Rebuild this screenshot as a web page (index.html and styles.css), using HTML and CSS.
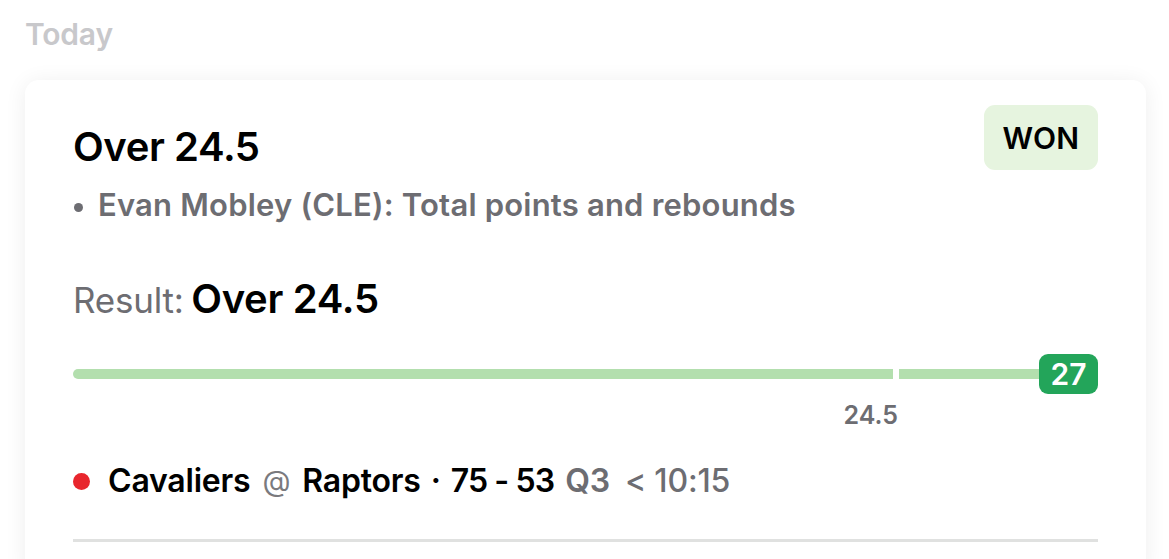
FILE: index.html
```html
<!DOCTYPE html>
<html>
<head>
<meta charset="utf-8">
<link rel="stylesheet" href="styles.css">
</head>
<body>
<div class="page">
  <div class="day">Today</div>
  <div class="card">
    <div class="head">
      <div class="head-text">
        <div class="title">Over 24.5</div>
        <div class="sub"><span class="sub-dot"></span>Evan Mobley (CLE): Total points and rebounds</div>
      </div>
      <div class="badge">WON</div>
    </div>
    <div class="result"><span class="result-label">Result:</span> <span class="result-value">Over 24.5</span></div>
    <div class="meter">
      <div class="track"></div>
      <div class="marker" style="left: 80%"></div>
      <div class="marker-label" style="left: 80%">24.5</div>
      <div class="value">27</div>
    </div>
    <div class="game">
      <span class="live-dot"></span>
      <span class="team">Cavaliers</span>
      <span class="at">@</span>
      <span class="team">Raptors</span>
      <span class="sep">·</span>
      <span class="score">75 - 53</span>
      <span class="period">Q3</span>
      <span class="clock">&lt; 10:15</span>
    </div>
    <div class="divider"></div>
  </div>
</div>
</body>
</html>
```

FILE: styles.css
```css
* { box-sizing: border-box; }
html, body { margin: 0; padding: 0; }
body {
  background: #ffffff;
  font-family: Inter, "Noto Sans", "Liberation Sans", sans-serif;
  color: #000;
  width: 1169px;
  height: 559px;
  overflow: hidden;
}
.page {
  padding: 14px 23px 0 25px;
  height: 559px;
  overflow: hidden;
}
.day {
  font-size: 30px;
  font-weight: 600;
  color: #c8c8cb;
  line-height: 40px;
  letter-spacing: -0.2px;
}
.card {
  margin-top: 26px;
  background: #fff;
  border-radius: 14px;
  box-shadow: 0 2px 22px rgba(0, 0, 0, 0.07);
  padding: 25px 48px 0 48px;
  height: 500px;
}
.head {
  display: flex;
  justify-content: space-between;
  align-items: flex-start;
}
.title {
  font-size: 40px;
  font-weight: 600;
  line-height: 48px;
  margin-top: 18px;
  letter-spacing: -0.4px;
}
.sub {
  display: flex;
  align-items: center;
  font-size: 31px;
  font-weight: 600;
  color: #6d6d72;
  line-height: 40px;
  margin-top: 14px;
  letter-spacing: 0.2px;
}
.sub-dot {
  width: 9px;
  height: 9px;
  border-radius: 50%;
  background: #6d6d72;
  margin: 4px 15px 0 1px;
}
.badge {
  background: #e6f4df;
  border-radius: 11px;
  width: 114px;
  height: 65px;
  display: flex;
  align-items: center;
  justify-content: center;
  font-size: 30px;
  font-weight: 600;
  letter-spacing: 0.3px;
}
.result {
  margin-top: 50px;
  line-height: 48px;
}
.result-label {
  font-size: 35px;
  font-weight: 400;
  color: #6d6d72;
  letter-spacing: -0.2px;
}
.result-value {
  font-size: 40px;
  font-weight: 600;
  letter-spacing: -0.3px;
  margin-left: 3px;
}
.meter {
  position: relative;
  margin-top: 23px;
  padding-top: 15px;
  height: 82px;
}
.track {
  height: 10px;
  background: #b3dfae;
  border-radius: 5px;
  margin-right: 40px;
}
.marker {
  position: absolute;
  top: 13px;
  width: 6px;
  height: 14px;
  background: #fff;
}
.marker-label {
  position: absolute;
  top: 46px;
  transform: translateX(-100%);
  margin-left: 5px;
  font-size: 25px;
  font-weight: 600;
  color: #6d6d72;
  line-height: 30px;
}
.value {
  position: absolute;
  right: 0;
  top: 0;
  width: 59px;
  height: 40px;
  border-radius: 9px;
  background: #23a55a;
  color: #fff;
  font-size: 30px;
  font-weight: 600;
  display: flex;
  align-items: center;
  justify-content: center;
}
.game {
  display: flex;
  align-items: center;
  margin-top: 23px;
  line-height: 44px;
  font-size: 32px;
  font-weight: 600;
  letter-spacing: -0.2px;
}
.live-dot {
  width: 17px;
  height: 17px;
  border-radius: 50%;
  background: #e8262d;
  margin-right: 18px;
}
.team { color: #000; }
.at { color: #7a7a7e; font-weight: 400; font-size: 29px; margin: 0 12px 0 12px; }
.sep { margin: 0 10px; }
.score { color: #000; letter-spacing: -0.9px; }
.period { color: #6d6d72; margin-left: 11px; }
.clock { color: #6d6d72; font-weight: 500; margin-left: 15px; }
.divider {
  margin-top: 36px;
  height: 3px;
  background: #e0e1e0;
}
```
